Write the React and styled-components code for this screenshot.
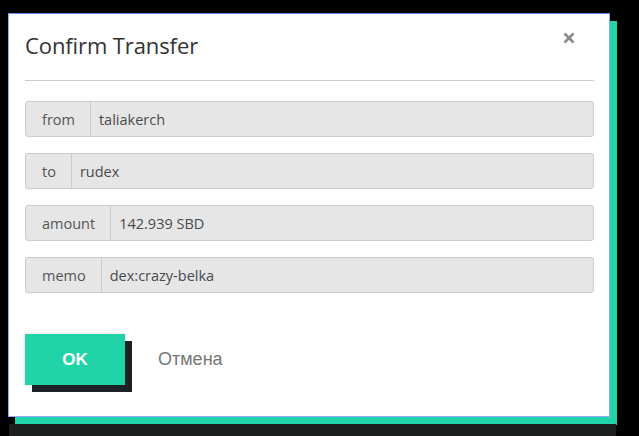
import React from "react";
import styled, { createGlobalStyle } from "styled-components";

const GlobalStyle = createGlobalStyle`
  html, body {
    margin: 0;
    padding: 0;
    background: #000;
  }
  body {
    font-family: "Open Sans", "Liberation Sans", sans-serif;
  }
`;

const rows = [
  { label: "from", value: "taliakerch" },
  { label: "to", value: "rudex" },
  { label: "amount", value: "142.939 SBD" },
  { label: "memo", value: "dex:crazy-belka" },
];

const App = () => {
  return (
    <Page>
      <GlobalStyle />
      <Modal>
        <Header>
          <Title>Confirm Transfer</Title>
          <Close aria-label="close">
            <svg width="12" height="12" viewBox="0 0 12 12">
              <path
                d="M1.5 1.5 L10.5 10.5 M10.5 1.5 L1.5 10.5"
                stroke="#8a8a8a"
                strokeWidth="2.6"
                strokeLinecap="butt"
              />
            </svg>
          </Close>
        </Header>
        <Divider />
        <Fields>
          {rows.map((row) => (
            <Group key={row.label}>
              <Addon>{row.label}</Addon>
              <Value>{row.value}</Value>
            </Group>
          ))}
        </Fields>
        <Footer>
          <OkButton>OK</OkButton>
          <CancelLink>Отмена</CancelLink>
        </Footer>
      </Modal>
      <BackStrip />
    </Page>
  );
};

const Page = styled.div`
  width: 639px;
  height: 436px;
  overflow: hidden;
  padding: 13px 0 0 8px;
  box-sizing: border-box;
`;

const Modal = styled.div`
  width: 602px;
  height: 404px;
  box-sizing: border-box;
  background: #fff;
  border: 1px solid #8eaef0;
  border-top-color: #5a8be0;
  box-shadow: 7px 8px 0 #20d3a8;
  padding: 17px 15px 0 16px;
  display: flex;
  flex-direction: column;
`;

const Header = styled.div`
  display: flex;
  justify-content: space-between;
  align-items: flex-start;
`;

const Title = styled.h4`
  margin: 0;
  font-size: 22px;
  line-height: 28px;
  font-weight: 400;
  color: #333;
  letter-spacing: -0.1px;
`;

const Close = styled.button`
  border: 0;
  background: none;
  padding: 0;
  margin: 1px 19px 0 0;
  width: 12px;
  height: 12px;
  display: flex;
  cursor: pointer;
`;

const Divider = styled.hr`
  border: 0;
  border-top: 1px solid #ccc;
  margin: 21px 0 20px;
`;

const Fields = styled.div`
  display: flex;
  flex-direction: column;
  gap: 16px;
`;

const Group = styled.div`
  display: flex;
  height: 36px;
  box-sizing: border-box;
  border: 1px solid #ccc;
  border-radius: 3px;
  background: #e6e6e6;
  font-size: 14.5px;
  color: #555;
`;

const Addon = styled.div`
  display: flex;
  align-items: center;
  padding: 0 15px 0 16px;
  border-right: 1px solid #ccc;
`;

const Value = styled.div`
  flex: 1;
  display: flex;
  align-items: center;
  padding-left: 8px;
  color: #4a4a4a;
`;

const Footer = styled.div`
  display: flex;
  align-items: center;
  margin-top: 41px;
`;

const OkButton = styled.button`
  width: 100px;
  height: 51px;
  border: 0;
  background: #20d4a8;
  color: #fff;
  font-family: "Liberation Sans", Arial, sans-serif;
  font-weight: 700;
  font-size: 17px;
  box-shadow: 7px 7px 0 #1d2226, 0 0 4px rgba(0, 0, 0, 0.15);
  cursor: pointer;
`;

const CancelLink = styled.span`
  margin-left: 33px;
  font-family: "Liberation Sans", Arial, sans-serif;
  font-size: 18px;
  color: #777;
  margin-top: -1px;
`;

const BackStrip = styled.div`
  width: 607px;
  height: 12px;
  margin: 7px 0 0 1px;
  background: #1e1f1f;
`;

export default App;
